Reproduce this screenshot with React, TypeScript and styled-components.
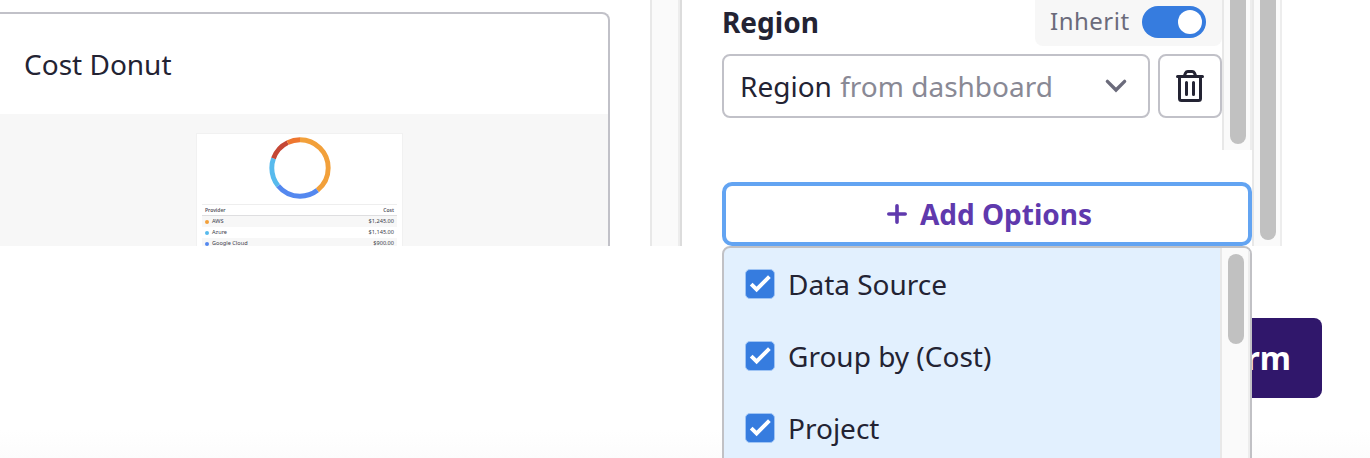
import React from "react";
import styled, { createGlobalStyle } from "styled-components";

const GlobalStyle = createGlobalStyle`
  *, *::before, *::after { box-sizing: border-box; }
  body {
    margin: 0;
    background: #ffffff;
    color: #232333;
    font-family: "Noto Sans", "Open Sans", sans-serif;
    font-size: 28px;
    line-height: 40px;
  }
`;

const Page = styled.div`
  width: 1370px;
  height: 458px;
  overflow: hidden;
  position: relative;
  display: flex;
  flex-direction: column;
  background: linear-gradient(#ffffff 430px, #fcfcfc 458px);
`;

const Workspace = styled.main`
  display: flex;
  flex: 0 0 246px;
  height: 246px;
  overflow: hidden;
`;

const Canvas = styled.section`
  flex: 0 0 650px;
  padding: 12px 40px 0 0;
`;

const Card = styled.article`
  height: 300px;
  border: 2px solid #c1c1c8;
  border-left: 0;
  border-radius: 0 8px 0 0;
  overflow: hidden;
`;

const CardTitle = styled.header`
  height: 100px;
  padding: 30px 24px 0;
`;

const CardBody = styled.div`
  height: 200px;
  padding: 19px 0 0 196px;
  background: #f7f7f7;
`;

const Preview = styled.div`
  width: 207px;
  height: 180px;
  padding: 3px 5px 0 5px;
  border: 1px solid #f1f1f1;
  background: #ffffff;
  display: flex;
  flex-direction: column;
`;

const DonutSvg = styled.svg`
  display: block;
  flex: none;
  width: 64px;
  height: 64px;
  margin: -1.3px 0 4.3px 65.5px;
`;

const PreviewRow = styled.div<{ $shaded?: boolean }>`
  display: flex;
  flex: none;
  align-items: center;
  justify-content: space-between;
  height: 11px;
  padding: 0 3px 0 3px;
  font-size: 5.6px;
  line-height: 11px;
  color: #3c3c49;
  background: ${(p) => (p.$shaded ? "#f7f7f7" : "#ffffff")};
`;

const PreviewHead = styled(PreviewRow)`
  height: 12px;
  border-top: 1px solid #eeeeee;
  border-bottom: 1px solid #dedee0;
  font-size: 5px;
  font-weight: 600;
  color: #555562;
`;

const Provider = styled.span`
  display: flex;
  align-items: center;
  gap: 3px;
`;

const Dot = styled.i<{ $color: string }>`
  width: 4px;
  height: 4px;
  border-radius: 50%;
  background: ${(p) => p.$color};
`;

const Track = styled.div<{ $width?: number }>`
  flex: 0 0 ${(p) => p.$width ?? 30}px;
  border: solid #e8e8e8;
  border-width: 0 2px;
  border-right-color: #ededed;
  background: #fafafa;
`;

const Thumb = styled.div<{ $height: number; $top?: number }>`
  width: 16px;
  height: ${(p) => p.$height}px;
  margin: ${(p) => p.$top ?? 0}px 0 0 6px;
  border-radius: ${(p) => (p.$top ? "8px" : "0 0 8px 8px")};
  background: #c1c1c1;
`;

const Sidebar = styled.aside`
  flex: 0 0 572px;
  padding-left: 40px;
  border-left: 2px solid #dcdcdc;
  display: flex;
  flex-direction: column;
  gap: 32px;
`;

const Filters = styled.div`
  display: flex;
  flex: 0 0 150px;
`;

const FilterFields = styled.div`
  flex: 0 0 500px;
`;

const FieldHead = styled.div`
  display: flex;
  justify-content: space-between;
  height: 46px;
  margin-bottom: 8px;
`;

const FieldLabel = styled.label`
  padding-top: 2px;
  font-weight: 700;
`;

const Inherit = styled.div`
  display: flex;
  align-items: flex-start;
  justify-content: space-between;
  width: 187px;
  padding: 1px 16px 0 15px;
  border-radius: 0 0 8px 8px;
  background: #f7f7f7;
  color: #6b6b7b;
  font-size: 24px;
  letter-spacing: 0.5px;
`;

const Switch = styled.span`
  width: 64px;
  height: 32px;
  margin-top: 5px;
  padding: 4px;
  border-radius: 16px;
  background: #367cdf;
  display: flex;
  justify-content: flex-end;
`;

const Knob = styled.i`
  width: 24px;
  height: 24px;
  border-radius: 50%;
  background: #ffffff;
`;

const FieldRow = styled.div`
  display: flex;
  gap: 8px;
`;

const Select = styled.div`
  display: flex;
  align-items: center;
  justify-content: space-between;
  width: 428px;
  height: 64px;
  padding: 0 20px 0 16px;
  border: 2px solid #c1c1c8;
  border-radius: 8px;
`;

const Muted = styled.span`
  margin-left: 1px;
  color: #898995;
`;

const IconButton = styled.button`
  width: 64px;
  height: 64px;
  padding: 0;
  display: grid;
  place-items: center;
  border: 2px solid #c1c1c8;
  border-radius: 8px;
  background: #ffffff;
  color: #232333;
`;

const AddButton = styled.button`
  display: flex;
  align-items: center;
  justify-content: center;
  gap: 13px;
  height: 64px;
  width: 530px;
  padding: 0 0 0 5px;
  border: 4px solid #63a4f2;
  border-radius: 10px;
  background: #ffffff;
  color: #5f39ad;
  font: inherit;
  font-weight: 700;
`;

const Footer = styled.footer`
  display: flex;
  justify-content: flex-end;
  padding: 72px 48px 0 0;
`;

const ConfirmButton = styled.button`
  height: 80px;
  padding: 0 31px 0 32px;
  border: 0;
  border-radius: 8px;
  background: #30176b;
  color: #ffffff;
  font: inherit;
  font-size: 32px;
  font-weight: 700;
`;

const Menu = styled.div`
  position: absolute;
  left: 722px;
  top: 246px;
  width: 530px;
  height: 260px;
  display: flex;
  overflow: hidden;
  border: 2px solid #c1c1c5;
  border-radius: 8px;
  background: #e2f0fe;
`;

const Options = styled.div`
  flex: 1;
`;

const Option = styled.div`
  display: flex;
  align-items: center;
  gap: 13px;
  height: 72px;
  padding-left: 21px;
`;

const CheckSvg = styled.svg`
  display: block;
  flex: none;
`;

const segments = [
  { from: 0, to: 142, color: "#f2a03a" },
  { from: 142, to: 231, color: "#5488ef" },
  { from: 231, to: 290, color: "#57baed" },
  { from: 290, to: 334, color: "#c54735" },
  { from: 334, to: 360, color: "#ee762f" },
];

const providers = [
  { name: "AWS", cost: "$1,245.00", color: "#f2a03a" },
  { name: "Azure", cost: "$1,145.00", color: "#57baed" },
  { name: "Google Cloud", cost: "$900.00", color: "#5488ef" },
];

const Donut = () => (
  <DonutSvg viewBox="0 0 64 64">
    <g fill="none" strokeWidth="4.9" transform="rotate(-90 32 32)">
      {segments.map((s) => (
        <circle
          key={s.color}
          cx="32"
          cy="32"
          r="28.2"
          pathLength="360"
          stroke={s.color}
          strokeDasharray={`${s.to - s.from} 360`}
          strokeDashoffset={-s.from}
        />
      ))}
    </g>
  </DonutSvg>
);

const Chevron = () => (
  <svg width="24" height="16" viewBox="0 0 24 16" fill="none">
    <path d="M3.4 3.4L12 12L20.6 3.4" stroke="#6b6b7b" strokeWidth="3.4" strokeLinecap="round" />
  </svg>
);

const Trash = () => (
  <svg width="28" height="32" viewBox="0 0 28 32" fill="none" stroke="currentColor">
    <path d="M1.5 6.5H26.5" strokeWidth="3" strokeLinecap="round" />
    <path d="M8.3 6L9.6 2.9Q10.3 1.5 11.8 1.5H16.2Q17.7 1.5 18.4 2.9L19.7 6" strokeWidth="3" />
    <path d="M3.5 7V28.5Q3.5 30.5 5.5 30.5H22.5Q24.5 30.5 24.5 28.5V7" strokeWidth="3" />
    <path d="M10.5 12.5V24.5M17.5 12.5V24.5" strokeWidth="3" strokeLinecap="round" />
  </svg>
);

const Plus = () => (
  <svg width="20" height="20" viewBox="0 0 20 20" fill="none">
    <path d="M10 1.8V18.2M1.8 10H18.2" stroke="currentColor" strokeWidth="3.6" strokeLinecap="round" />
  </svg>
);

const Checkbox = () => (
  <CheckSvg width="30" height="30" viewBox="0 0 30 30">
    <rect x="0.5" y="0.5" width="29" height="29" rx="4.5" fill="#367cdf" stroke="#9fc4f4" />
    <path d="M6.2 15.2L11.6 20.4L24.4 7.6" fill="none" stroke="#ffffff" strokeWidth="3.9" />
  </CheckSvg>
);

export default function App() {
  return (
    <Page>
      <GlobalStyle />
      <Workspace>
        <Canvas>
          <Card>
            <CardTitle>Cost Donut</CardTitle>
            <CardBody>
              <Preview>
                <Donut />
                <PreviewHead>
                  <span>Provider</span>
                  <span>Cost</span>
                </PreviewHead>
                {providers.map((p, i) => (
                  <PreviewRow key={p.name} $shaded={i % 2 === 0}>
                    <Provider>
                      <Dot $color={p.color} />
                      {p.name}
                    </Provider>
                    <span>{p.cost}</span>
                  </PreviewRow>
                ))}
              </Preview>
            </CardBody>
          </Card>
        </Canvas>
        <Track />
        <Sidebar>
          <Filters>
            <FilterFields>
              <FieldHead>
                <FieldLabel>Region</FieldLabel>
                <Inherit>
                  Inherit
                  <Switch>
                    <Knob />
                  </Switch>
                </Inherit>
              </FieldHead>
              <FieldRow>
                <Select>
                  <span>
                    Region <Muted>from dashboard</Muted>
                  </span>
                  <Chevron />
                </Select>
                <IconButton aria-label="Remove">
                  <Trash />
                </IconButton>
              </FieldRow>
            </FilterFields>
            <Track>
              <Thumb $height={144} />
            </Track>
          </Filters>
          <AddButton>
            <Plus />
            Add Options
          </AddButton>
        </Sidebar>
        <Track>
          <Thumb $height={240} />
        </Track>
      </Workspace>
      <Footer>
        <ConfirmButton>Confirm</ConfirmButton>
      </Footer>
      <Menu>
        <Options>
          {["Data Source", "Group by (Cost)", "Project"].map((name) => (
            <Option key={name}>
              <Checkbox />
              {name}
            </Option>
          ))}
        </Options>
        <Track>
          <Thumb $height={90} $top={6} />
        </Track>
      </Menu>
    </Page>
  );
}
